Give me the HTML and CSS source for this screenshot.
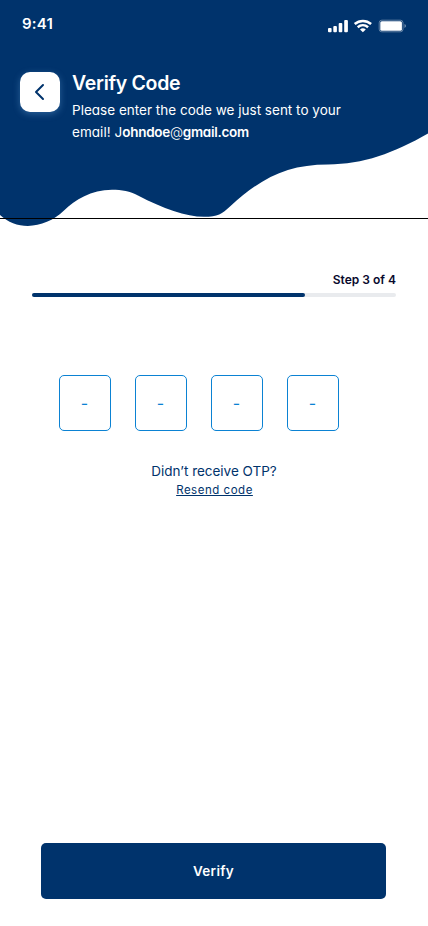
FILE: index.html
```html
<!DOCTYPE html>
<html lang="en">
<head>
<meta charset="utf-8">
<title>Verify Code</title>
<link rel="stylesheet" href="styles.css">
</head>
<body>
<main class="screen">
  <header class="hero">
    <svg class="wave" viewBox="0 0 428 230" aria-hidden="true">
      <path fill="#00336c" d="M0 0H428V133.500C394 153 363 164.400 328 164.400C287 164.400 261 178 230 206.500C222 214 218 216.800 204 216.800C186 216.800 163 208.500 138 195.500C130 191.300 122 189.800 112 189.800C91 189.800 75 200 64 210.500C46 228 18 232 0 215Z"/>
      <path fill="#000" d="M0 218H428V219H0Z"/>
    </svg>
    <div class="status">
      <span class="time">9:41</span>
      <svg class="signals" width="80" height="16" viewBox="0 0 80 16" fill="#fff" aria-hidden="true">
        <rect x="0" y="9" width="3.600" height="4.300" rx="1"/>
        <rect x="5.300" y="7" width="3.600" height="6.300" rx="1"/>
        <rect x="10.700" y="4" width="3.600" height="9.300" rx="1"/>
        <rect x="16.200" y="1" width="3.700" height="12.300" rx="1"/>
        <g fill="none" stroke="#fff" stroke-width="2.500">
          <path d="M26.700 5C31.500.9 38.300.9 43.100 5"/>
          <path d="M29.700 8.200C32.800 5.600 37 5.600 40.100 8.200"/>
        </g>
        <path d="M32 10.400Q34.900 8.200 37.800 10.400L34.900 13.300Z"/>
        <rect x="51.200" y="1.200" width="23.800" height="11.600" rx="2.600" fill="none" stroke="#fff" stroke-opacity=".38"/>
        <rect x="52.300" y="2.300" width="21.600" height="9.400" rx="1.500"/>
        <path opacity=".45" d="M76.500 5.100Q78 5.700 78 7T76.500 8.900Z"/>
      </svg>
    </div>
    <div class="intro">
      <button class="back" aria-label="Back">
        <svg width="40" height="40" viewBox="0 0 40 40" fill="none" stroke="#00336c" stroke-width="2" stroke-linecap="round" stroke-linejoin="round"><path d="M23 13L16 20L23 27"/></svg>
      </button>
      <div class="copy">
        <h1>Verify Code</h1>
        <p><span class="line-one">Please enter the code we just sent to your</span><br><span class="line-two">email! J</span><b>ohndoe<span class="at">@</span>gmail.com</b></p>
      </div>
    </div>
  </header>
  <section class="progress">
    <span class="step">Step 3 of 4</span>
    <div class="track"><div class="fill"></div></div>
  </section>
  <section class="codes">
    <div class="digit"><span>-</span></div>
    <div class="digit"><span>-</span></div>
    <div class="digit"><span>-</span></div>
    <div class="digit"><span>-</span></div>
  </section>
  <section class="resend">
    <span class="question">Didn’t receive OTP?</span>
    <a class="link">Resend code</a>
  </section>
  <button class="verify"><span>Verify</span></button>
</main>
</body>
</html>
```
FILE: styles.css
```css
* { box-sizing: border-box; }
body { margin: 0; background: #fff; font-family: Inter, "Liberation Sans", sans-serif; font-feature-settings: "cv11" 1; }
button { border: 0; padding: 0; font-family: inherit; }
.screen { width: 428px; height: 926px; display: flex; flex-direction: column; overflow: hidden; }
.hero { height: 230px; position: relative; }
.wave { position: absolute; top: 0; left: 0; width: 428px; height: 230px; }
.status { position: relative; height: 72px; padding: 14px 20px 0 22px; display: flex; justify-content: space-between; }
.time { color: #fff; font-size: 15px; line-height: 20px; font-weight: 600; letter-spacing: .2px; }
.signals { margin-top: 5px; }
.intro { position: relative; display: flex; gap: 12px; padding-left: 20px; color: #fff; }
.back { width: 40px; height: 40px; border-radius: 10px; background: #fff; box-shadow: 0 2px 7px rgba(120, 180, 235, .35); }
.back svg { display: block; }
h1 { margin: -3px 0 0; font-size: 19.5px; line-height: 28px; font-weight: 600; letter-spacing: -.3px; }
p { margin: 2px 0 0; font-size: 13.5px; line-height: 22px; white-space: nowrap; }
.line-one { letter-spacing: .01px; }
.line-two { letter-spacing: .05px; }
p b { font-weight: 600; letter-spacing: -.29px; }
.at { font-weight: 300; }
.progress { margin: 42px 32px 0; display: flex; flex-direction: column; }
.step { align-self: flex-end; color: #09092d; font-size: 12px; line-height: 16px; font-weight: 600; letter-spacing: 0; }
.track { margin-top: 5px; height: 4px; border-radius: 2px; background: #e9ebee; }
.fill { width: 75%; height: 4px; border-radius: 2px; background: #00336c; }
.codes { margin: 78px 0 0 59px; display: flex; gap: 24px; }
.digit { width: 52px; height: 56px; border: 1px solid #0b82d3; border-radius: 5px; display: flex; align-items: center; justify-content: center; color: #0b82d3; font-size: 16px; line-height: 20px; }
.digit span { margin-left: -1px; }
.resend { margin-top: 30px; display: flex; flex-direction: column; align-items: center; color: #00336c; }
.question { font-size: 13.5px; line-height: 20px; letter-spacing: -.02px; }
.link { margin-left: 1px; font-size: 11.5px; line-height: 18px; letter-spacing: .52px; text-decoration: underline; text-underline-offset: 1px; text-decoration-thickness: 1px; }
.verify { margin: auto 42px 27px 41px; height: 56px; border-radius: 5px; background: #00336c; color: #fff; font-size: 13.5px; font-weight: 600; letter-spacing: .3px; }
```
